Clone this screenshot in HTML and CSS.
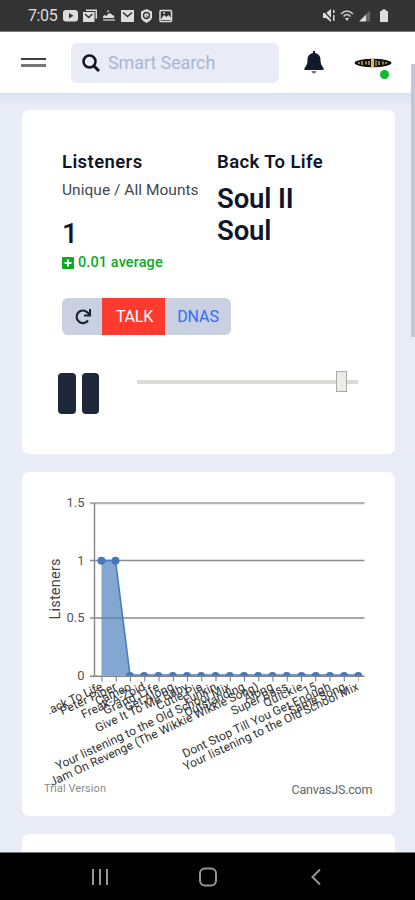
FILE: index.html
```html
<!DOCTYPE html>
<html lang="en">
<head>
<meta charset="utf-8">
<title>Listeners</title>
<link rel="stylesheet" href="styles.css">
</head>
<body>
<div class="phone">
  <div class="status">
    <span class="clock">7:05</span>
    <svg width="112" height="16" viewBox="62 8 112 16" fill="#ddd">
      <rect x="63" y="10" width="15" height="11.500" rx="3"/><path d="M69 13l4.500 2.800-4.500 2.800z" fill="#333"/>
      <path d="M86 9.500h11v9h-1.500v-7.500h-9.500z"/><rect x="83" y="12" width="11.500" height="10"/><path d="M85 14l3.700 3.500 3.700-3.500" fill="none" stroke="#333" stroke-width="1.500"/>
      <path d="M103 17c0-2 3-2 4-1 0-3 4-4 5-1 2 0 3 2 2 3h-11z"/><path d="M103 20h12M107 12l2-1.500" stroke="#bbb" stroke-width="1.500"/>
      <rect x="121" y="10" width="13" height="12"/><path d="M123 12.500l4.500 4 4.500-4" fill="none" stroke="#333" stroke-width="1.600"/>
      <path d="M146.500 9l5.500 2.500v5.500c0 3-3 4.500-5.500 6-2.500-1.500-5.500-3-5.500-6v-5.500z"/><circle cx="146.500" cy="15.500" r="3" fill="none" stroke="#333" stroke-width="1.300"/><path d="M146 15.500l3 2.500" stroke="#333"/>
      <rect x="160" y="10.500" width="11.500" height="11" rx="1" fill="none" stroke="#ddd" stroke-width="1.500"/><path d="M161 19l3-4 2.500 2 2-2 2.500 3v2h-10z"/><circle cx="164" cy="13" r="1"/>
    </svg>
    <svg class="signals" width="74" height="16" viewBox="320 8 74 16" fill="#ddd">
      <path d="M323 13h3l5-4v13l-5-4h-3zM333 10h1.500v3h-1.500zM333 15h1.500v6h-1.500z"/><path d="M323 10l10 11" stroke="#333" stroke-width="1.200"/>
      <g fill="none" stroke="#ccc" stroke-width="1.600"><path d="M341 14q6-6 12 0M343.500 16.500q3.500-4 7 0"/></g><path d="M345 18h4l-2 3z"/>
      <path d="M359 21.500l7-7v7z"/><path d="M366 14.500l4-4v11h-4z" fill="#666"/>
      <path d="M380 11h2v-1.500h4v1.500h2v11h-8z"/>
    </svg>
  </div>
  <header class="topbar">
    <div class="burger"><i></i><i></i></div>
    <div class="search">
      <svg width="18" height="18" viewBox="0 0 18 18" fill="none" stroke="#10142a" stroke-width="2.500"><circle cx="7.500" cy="7.500" r="6"/><path d="M12 12l5 5" stroke-width="3"/></svg>
      <span>Smart Search</span>
    </div>
    <svg class="bell" width="20" height="24" viewBox="0 0 20 24" fill="#11192c"><path d="M9 0h2v2c4 1 5.500 3.500 5.500 7 0 4 1 5.500 3 8v2h-19v-2c2-2.500 3-4 3-8 0-3.500 1.500-6 5.500-7z"/><path d="M7.500 20h5q-.5 2.500-2.500 2.500t-2.500-2.500z" fill="#777"/></svg>
    <div class="avatar">
      <svg width="38" height="10" viewBox="0 0 38 10"><ellipse cx="19" cy="5" rx="18.500" ry="4.200" fill="#17130e"/><g stroke="#b9a172" stroke-width="1.500"><path d="M4 5h2M8 3v4M12 3.500v3M15 3v4M25 3v4M29 3.500v3M32 4v2"/></g><path d="M18.500 1v8" stroke="#e9b653" stroke-width="3"/><path d="M22 2v6" stroke="#d5bd8a"/></svg>
      <b></b>
    </div>
  </header>
  <main>
    <section class="card player">
      <div class="columns">
        <div>
          <h2>Listeners</h2>
          <p class="sub">Unique / All Mounts</p>
          <p class="count">1</p>
          <p class="avg"><svg width="12" height="12" viewBox="0 0 12 12"><rect width="12" height="12" rx="1" fill="#0cab24"/><path d="M6 2.500v7M2.500 6h7" stroke="#fff" stroke-width="2"/></svg>0.01 average</p>
        </div>
        <div class="track">
          <h2>Back To Life</h2>
          <p class="artist">Soul II<br>Soul</p>
        </div>
      </div>
      <div class="buttons">
        <span class="refresh"><svg width="18" height="18" viewBox="0 0 18 18" fill="none" stroke="#1b2333" stroke-width="2.200"><path d="M14 12.500a6.300 6.300 0 1 1-.5-8l2 2"/><path d="M16 1v6.500h-6" stroke-width="2"/></svg></span>
        <span class="talk">TALK</span><span class="dnas">DNAS</span>
      </div>
      <div class="controls">
        <div class="pause"><i></i><i></i></div>
        <div class="slider"><i></i></div>
      </div>
    </section>
    <section class="card chart">
      <svg width="373" height="344" viewBox="22 472 373 344">
        <g stroke="#8c8c8c" stroke-width="1.300"><path d="M90 503.200h274.500" stroke="#b5b5b5" stroke-width="2.200"/><path d="M90 560.500h274.500M90 618h274.500"/></g>
        <path d="M101.500 560.500h14l14.500 115h-28.500z" fill="#4f81bc" fill-opacity=".7"/>
        <path d="M101.500 560.500h14l14.500 114.500h228" fill="none" stroke="#4a7dbb" stroke-width="1.600"/>
        <g fill="#4478b9"><circle cx="101.500" cy="560.700" r="4"/><circle cx="115.500" cy="560.700" r="4"/>
        <path d="M126 676a4 4 0 0 1 8 0zm14.200 0a4 4 0 0 1 8 0zm14.200 0a4 4 0 0 1 8 0zm14.400 0a4 4 0 0 1 8 0zm14.200 0a4 4 0 0 1 8 0zm14.200 0a4 4 0 0 1 8 0zm14.300 0a4 4 0 0 1 8 0zm14.300 0a4 4 0 0 1 8 0zm14.200 0a4 4 0 0 1 8 0zm14.200 0a4 4 0 0 1 8 0zm14.300 0a4 4 0 0 1 8 0zm14.200 0a4 4 0 0 1 8 0zm14.800 0a4 4 0 0 1 8 0zm14.200 0a4 4 0 0 1 8 0zm14.200 0a4 4 0 0 1 8 0zm14.200 0a4 4 0 0 1 8 0zm14.200 0a4 4 0 0 1 8 0z"/></g>
        <path d="M94.500 503v173M90 676.200h274.500" fill="none" stroke="#858585" stroke-width="1.400"/>
        <path d="M101.500 679h257" stroke="#777" stroke-width="5" stroke-dasharray="1 13.250"/>
        <g class="axis"><text x="84.500" y="507">1.5</text><text x="84.500" y="564.500">1</text><text x="84.500" y="622">0.5</text><text x="84.500" y="679.500">0</text></g>
        <text class="ytitle" transform="translate(60 619.500) rotate(-90)" textLength="61">Listeners</text>
        <g class="songs" transform="translate(1.500 -.5)">
          <text transform="translate(102 690) rotate(-25)" textLength="60">.ack To Life</text>
          <text transform="translate(116 690) rotate(-25)" textLength="61">Peter Piper</text>
          <text transform="translate(130.500 690) rotate(-25)">Cameo</text>
          <text transform="translate(144.500 690) rotate(-25)" textLength="69">Freak-A-Zoid</text>
          <text transform="translate(158.500 690) rotate(-25)" textLength="60">Grand Life</text>
          <text transform="translate(173 690) rotate(-25)">Get Along</text>
          <text transform="translate(187.500 690) rotate(-25)" textLength="101">Give It To Me Baby</text>
          <text transform="translate(201.500 690) rotate(-25)" textLength="49">Cutie Pie</text>
          <text transform="translate(216 690) rotate(-25)">Funkin</text>
          <text transform="translate(229.500 690) rotate(-25)" textLength="191">Your listening to the Old School Mix</text>
          <text transform="translate(244 690) rotate(-25)">Outstanding</text>
          <text transform="translate(258 690) rotate(-25)" textLength="229">Jam On Revenge (The Wikkie Wikkie Song)</text>
          <text transform="translate(272.500 690) rotate(-25)">Along</text>
          <text transform="translate(287 690) rotate(-25)" textLength="61">Super Bass</text>
          <text transform="translate(302 690) rotate(-25)" textLength="42">Quickie</text>
          <text transform="translate(316 690) rotate(-25)">15</text>
          <text transform="translate(330 690) rotate(-25)" textLength="162">Dont Stop Till You Get Enough</text>
          <text transform="translate(344.500 690) rotate(-25)">Same Song</text>
          <text transform="translate(358 690) rotate(-25)" textLength="192">Your listening to the Old School Mix</text>
        </g>
        <text class="trial" x="44" y="791.500" textLength="62">Trial Version</text>
        <text class="credit" x="291.500" y="793.500" textLength="81">CanvasJS.com</text>
      </svg>
    </section>
    <section class="card"></section>
    <div class="scrollbar"></div>
  </main>
  <nav>
    <svg width="415" height="47" viewBox="0 853 415 47" fill="none" stroke="#969696" stroke-width="2"><path d="M93 869v16M100 869v16M107 869v16"/><rect x="200" y="868.500" width="16" height="17" rx="5"/><path d="M320 869.500l-7.500 7.500 7.500 7.500"/></svg>
  </nav>
</div>
</body>
</html>
```
FILE: styles.css
```css
* { box-sizing: border-box; }
body { margin: 0; font-family: Roboto, "Liberation Sans", sans-serif; color: #11152a; }
h2, p { margin: 0; }
svg { display: block; flex: none; }
.phone { width: 415px; height: 900px; display: flex; flex-direction: column; overflow: hidden; position: relative; background: #e9edf7; }
.status { height: 32px; flex: none; background: #333; display: flex; align-items: center; padding: 0 21px 0 28px; border-bottom: 1px solid #777; }
.clock { width: 34px; font-size: 16px; letter-spacing: -.4px; color: #ddd; }
.signals { margin-left: auto; }
.topbar { height: 61px; flex: none; background: #fff; display: flex; align-items: center; padding: 0 23px 0 21px; }
.burger { width: 25px; display: grid; gap: 4px; }
.burger i { height: 2px; background: #3d3d42; }
.burger i + i { height: 3px; background: #777; }
.search { margin-left: 25px; width: 208px; height: 40px; border-radius: 6px; background: #e9ecf6; display: flex; align-items: center; padding-left: 11px; gap: 8px; font-size: 18px; color: #aab5d5; }
.search span { letter-spacing: -.1px; }
.bell { margin-left: 25px; }
.avatar { margin-left: auto; width: 38px; position: relative; }
.avatar b { position: absolute; left: 26px; top: 12px; width: 9px; height: 9px; border-radius: 50%; background: #0fbb35; }
main { flex: 1; overflow: hidden; background: linear-gradient(#d9e2f3, #e9edf7 14px); padding: 17px 20px 0 22px; display: flex; flex-direction: column; gap: 18px; }
.card { height: 344px; flex: none; background: #fff; border-radius: 7px; overflow: hidden; }
.player { padding: 41px 0 0 40px; }
.columns { display: grid; grid-template-columns: 155px 150px; height: 147px; }
h2 { font-size: 18.500px; line-height: 22px; font-weight: 600; letter-spacing: .4px; }
.sub { font-size: 15.500px; line-height: 20px; margin-top: 7px; color: #444753; white-space: nowrap; letter-spacing: .03px; }
.count { font-size: 28px; line-height: 34px; font-weight: 500; margin-top: 17px; }
.avg { display: flex; align-items: center; gap: 4px; font-size: 14.500px; line-height: 18px; font-weight: 500; color: #0cab24; margin-top: 3px; letter-spacing: .1px; }
.artist { font-size: 27.500px; line-height: 32px; font-weight: 600; margin-top: 10px; letter-spacing: -.15px; }
.buttons { display: flex; width: 169px; height: 37px; border-radius: 6px; overflow: hidden; background: #c8d0e2; font-size: 16px; line-height: 37px; }
.refresh { width: 40px; display: grid; place-items: center; padding-left: 2px; }
.talk { width: 63px; padding-left: 2px; background: #ff3b30; color: #fff; text-align: center; letter-spacing: -.2px; }
.dnas { flex: 1; text-align: center; color: #306cf5; letter-spacing: -.1px; }
.controls { display: flex; margin: 38px 0 0 -4px; }
.pause { display: flex; gap: 6px; width: 79px; height: 41px; }
.pause i { width: 17.500px; border-radius: 4px; background: #1e2739; }
.slider { width: 221px; height: 4px; margin-top: 7px; background: #dcdbd8; position: relative; }
.slider i { position: absolute; left: 199px; top: -9px; width: 11px; height: 21px; border: 1.500px solid #aaa9a6; background: #ecebe8; }
.axis { font-size: 13px; fill: #555; text-anchor: end; }
.ytitle { font-size: 14.500px; fill: #444; }
.songs { font-size: 12px; fill: #333; text-anchor: end; }
.trial { font-size: 11px; fill: #8b8b8b; }
.credit { font-size: 12.500px; fill: #666; }
.scrollbar { position: absolute; right: 0; top: 64px; width: 4px; height: 273px; background: #c3c7d1; }
nav { height: 48px; flex: none; background: #000; border-top: 1px solid #777; }
```
